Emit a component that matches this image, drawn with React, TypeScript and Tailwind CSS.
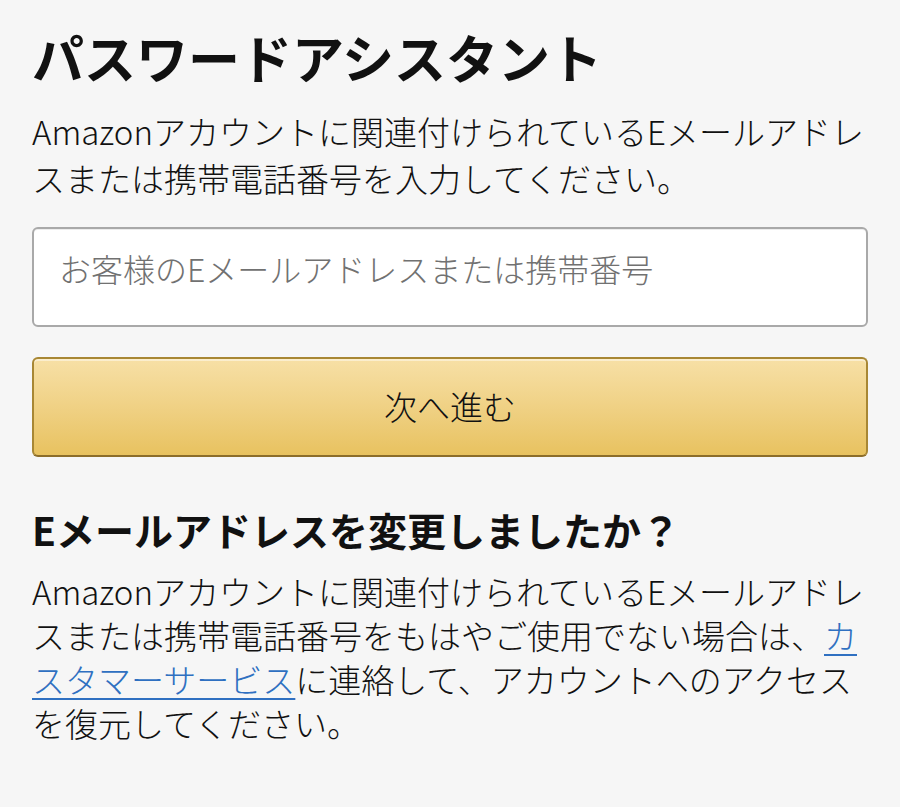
export default function App() {
  return (
    <div
      className="min-h-[807px] w-[900px] bg-[#f6f6f6] px-8 pt-[26px] text-[#111111]"
      style={{ fontFamily: '"Noto Sans CJK JP", "Noto Sans", sans-serif' }}
    >
      {/* タイトル */}
      <h1 className="text-[52px] font-bold leading-[62px] tracking-normal">パスワードアシスタント</h1>

      <p className="mt-[20px] whitespace-nowrap text-[33px] font-light leading-[47px] text-[#111111]">
        Amazonアカウントに関連付けられているEメールアドレ
        <br />
        スまたは携帯電話番号を入力してください。
      </p>

      {/* 入力欄 */}
      <div className="mt-[25px]">
        <input
          type="text"
          placeholder="お客様のEメールアドレスまたは携帯番号"
          className="block h-[100px] w-full rounded-[6px] border-2 border-[#a9a9a9] bg-white px-[25px] pb-[18px] text-[32px] font-light text-[#111] shadow-[inset_0_1px_0_rgba(0,0,0,0.07)] outline-none placeholder:text-[#717171]"
        />
      </div>

      {/* ボタン */}
      <button
        type="button"
        className="mt-[30px] flex h-[100px] w-full items-center justify-center rounded-[6px] border-2 border-[#a88734] border-b-[#8c6d2a] bg-gradient-to-b from-[#f7e0a6] to-[#e8c25f] text-[33px] font-light text-[#111111] shadow-[inset_0_2px_0_rgba(255,255,255,0.45)]"
      >
        次へ進む
      </button>

      {/* Eメール変更 */}
      <h2 className="mt-[49px] text-[39px] font-bold leading-[46px]">Eメールアドレスを変更しましたか？</h2>

      <p className="mt-[17px] whitespace-nowrap text-[33px] font-light leading-[44px] text-[#111111]">
        Amazonアカウントに関連付けられているEメールアドレ
        <br />
        スまたは携帯電話番号をもはやご使用でない場合は、
        <a href="#" className="text-[#2f70c1] underline decoration-[2px] underline-offset-[5px]">
          カ
          <br />
          スタマーサービス
        </a>
        に連絡して、アカウントへのアクセス
        <br />
        を復元してください。
      </p>
    </div>
  );
}
